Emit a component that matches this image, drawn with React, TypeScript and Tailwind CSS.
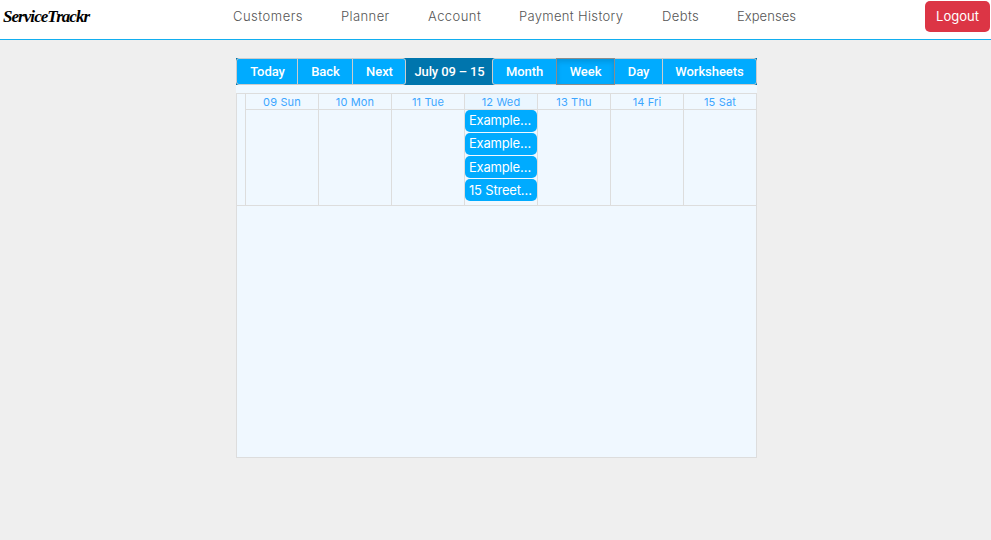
const links = [
  { label: "Customers", cls: "w-[71px] mr-[37px] tracking-[0.5px]" },
  { label: "Planner", cls: "w-[49px] mr-[38px] tracking-[0.4px]" },
  { label: "Account", cls: "w-[54px] mr-[37px] tracking-[0.45px]" },
  { label: "Payment History", cls: "w-[105px] mr-[38px] tracking-[0.33px]" },
  { label: "Debts", cls: "w-[38px] mr-[37px] tracking-[0.4px]" },
  { label: "Expenses", cls: "w-[60px] tracking-[0.05px]" },
];

const days = ["09 Sun", "10 Mon", "11 Tue", "12 Wed", "13 Thu", "14 Fri", "15 Sat"];
const events = ["Example…", "Example…", "Example…", "15 Street…"];

function ToolButton({ label, cls }: { label: string; cls: string }) {
  return (
    <button className={`h-[27px] shrink-0 whitespace-nowrap border bg-[#00abff] text-center leading-[25px] ${cls}`}>
      {label}
    </button>
  );
}

export default function App() {
  return (
    <div className="h-[540px] w-[991px] overflow-hidden bg-[#efefef] font-['Inter',sans-serif]">
      <header className="flex h-10 border-b border-[#12aeef] bg-white">
        <div className="w-[229px] pl-[3px] pt-[5px] font-['Liberation_Serif',serif] text-[17px] font-bold italic leading-6 tracking-[-0.95px] text-black">
          ServiceTrackr
        </div>
        <nav className="flex grow pl-[4px] pt-[5px] text-[13px] font-light leading-[23px] text-[#555]">
          {links.map((l) => (
            <a key={l.label} className={`shrink-0 whitespace-nowrap ${l.cls}`}>{l.label}</a>
          ))}
        </nav>
        <button className="mr-px mt-px h-[31px] w-[65px] rounded-[5px] bg-[#dc3545] text-[13px] leading-[31px] text-white">
          Logout
        </button>
      </header>

      <main className="ml-[236px] mt-[18px] h-[400px] w-[521px] bg-[#f0f8ff]">
        <div className="flex h-[27px] bg-[#0075ad] font-['Roboto',sans-serif] text-[13px] font-medium tracking-[-0.06px] text-white">
          <ToolButton label="Today" cls="w-[62px] rounded-l-[3px] border-[#ccc] pl-px" />
          <ToolButton label="Back" cls="-ml-px w-[56px] border-[#ccc] pl-px" />
          <ToolButton label="Next" cls="-ml-px w-[54px] rounded-r-[3px] border-[#ccc] pl-px" />
          <span className="w-[87px] whitespace-nowrap pl-px text-center leading-[27px] tracking-[-0.15px]">July 09 – 15</span>
          <ToolButton label="Month" cls="w-[65px] rounded-l-[3px] border-[#ccc]" />
          <ToolButton label="Week" cls="z-10 -ml-px w-[59px] border-[#8c8c8c] shadow-[inset_0_3px_5px_rgba(0,0,0,0.125)]" />
          <ToolButton label="Day" cls="-ml-px w-[49px] border-[#ccc]" />
          <ToolButton label="Worksheets" cls="-ml-px w-[95px] rounded-r-[3px] border-[#ccc]" />
        </div>

        <section className="mt-2 h-[365px] border border-[#ddd]">
          <div className="flex h-[112px] border-b border-[#ddd]">
            <div className="w-2 shrink-0" />
            {days.map((day, i) => (
              <div key={day} className="w-[73px] shrink-0 border-l border-[#ddd]">
                <div className={`h-4 whitespace-nowrap border-b border-[#ddd] text-center text-[11px] leading-4 tracking-[0.15px] text-[#3ca6ff] ${i === 3 ? "bg-[#eaf6ff]" : ""}`}>
                  {day}
                </div>
                {i === 3 && (
                  <div className="flex flex-col gap-px">
                    {events.map((e, n) => (
                      <div key={n} className={`h-[22px] whitespace-nowrap rounded-[5px] bg-[#00abff] pl-[4px] text-[13px] tracking-[-0.2px] text-white ${n < 2 ? "leading-[21px]" : "leading-[22px]"}`}>
                        {e}
                      </div>
                    ))}
                  </div>
                )}
              </div>
            ))}
          </div>
        </section>
      </main>
    </div>
  );
}
